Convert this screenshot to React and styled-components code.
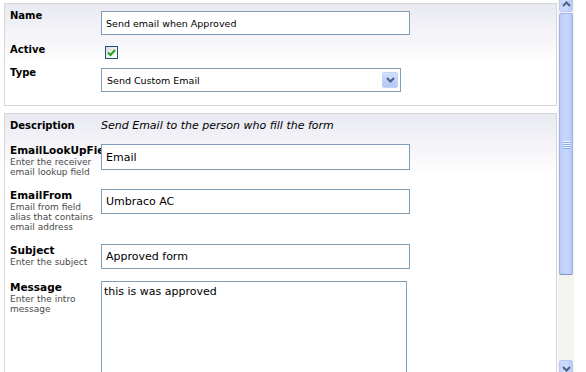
import React from "react";
import styled, { createGlobalStyle } from "styled-components";

const GlobalStyle = createGlobalStyle`
  html, body { margin: 0; padding: 0; background: #fff; overflow: hidden; }
  body { font-family: "DejaVu Sans", Verdana, sans-serif; color: #000; }
  * { box-sizing: border-box; }
`;

const Page = styled.div`
  display: flex;
  align-items: flex-start;
  width: 586px;
  height: 372px;
  overflow: hidden;
  background: #fff;
`;

const Main = styled.div`
  width: 553px;
  margin-left: 4px;
  padding-top: 3px;
  display: flex;
  flex-direction: column;
  gap: 7px;
`;

const Panel = styled.div`
  border: 1px solid #d6d6d6;
  background: linear-gradient(#e9e9f2 0, #fbfbfd 50px, #fff 60px);
  padding: ${(p) => p.$pad};
  height: ${(p) => p.$h};
  display: flex;
  flex-direction: column;
  gap: ${(p) => p.$gap};
`;

const Row = styled.div`
  display: grid;
  grid-template-columns: 91px 1fr;
  align-items: ${(p) => p.$align || "start"};
  height: ${(p) => p.$h || "auto"};
`;

const Label = styled.div`
  font-weight: bold;
  font-size: 10px;
  line-height: ${(p) => p.$lh || "10px"};
  white-space: nowrap;
  overflow: hidden;
`;

const FieldLabel = styled.div`
  overflow: hidden;
`;

const Title = styled.div`
  font-weight: bold;
  font-size: 10.5px;
  line-height: 13px;
  white-space: nowrap;
  overflow: hidden;
`;

const Help = styled.div`
  font-size: 9px;
  line-height: 10px;
  color: #4a4a4a;
  white-space: nowrap;
`;

const Italic = styled.div`
  font-style: italic;
  font-size: 11px;
  line-height: 12px;
  white-space: nowrap;
`;

const TextBox = styled.input`
  display: block;
  width: ${(p) => p.$w || "309px"};
  height: ${(p) => p.$h || "25px"};
  border: 1px solid #7f9db9;
  background: #fff;
  padding: 0 4px;
  margin: 0;
  font-family: "DejaVu Sans", Verdana, sans-serif;
  font-size: ${(p) => p.$fs || "11px"};
  color: #000;
  outline: none;
`;

const TextArea = styled.textarea`
  display: block;
  width: 306px;
  height: 110px;
  border: 1px solid #7f9db9;
  background: #fff;
  padding: 3px 2px;
  margin: 0;
  font-family: "DejaVu Sans", Verdana, sans-serif;
  font-size: 11px;
  line-height: 13px;
  color: #000;
  resize: none;
  outline: none;
  overflow: hidden;
`;

const CheckBox = styled.div`
  width: 13px;
  height: 13px;
  margin: 1px 0 0 4px;
  border: 1px solid #1c5180;
  background: linear-gradient(135deg, #dcdcd7 0%, #f4f4f0 60%, #fff 100%);
  display: flex;
  align-items: center;
  justify-content: center;
`;

const SelectBox = styled.div`
  width: 300px;
  height: 24px;
  border: 1px solid #7f9db9;
  background: #fff;
  display: flex;
  align-items: center;
  justify-content: space-between;
  padding: 0 2px 0 5px;
  font-size: 9.5px;
`;

const DropButton = styled.div`
  width: 16px;
  height: 16px;
  border-radius: 2px;
  border: 1px solid #c3d3f8;
  background: linear-gradient(#d3e0fd, #bccffa 60%, #b3c8f7);
  display: flex;
  align-items: center;
  justify-content: center;
`;

const Scrollbar = styled.div`
  width: 17px;
  height: 382px;
  margin-top: -5px;
  display: flex;
  flex-direction: column;
  background: #f4f3ee;
  border-left: 1px solid #fbfbf8;
  flex: 0 0 17px;
`;

const ScrollButton = styled.div`
  flex: 0 0 17px;
  margin: 0 1px;
  border: 1px solid #b9cbf3;
  border-radius: 2px;
  background: linear-gradient(90deg, #c6d6fc, #cad9fd 50%, #b9cbf6);
  display: flex;
  align-items: center;
  justify-content: center;
`;

const Thumb = styled.div`
  flex: 0 0 262px;
  margin: 1px 1px 0;
  border: 1px solid #9eb4e8;
  border-bottom-color: #7d94c8;
  border-radius: 2px;
  background: linear-gradient(90deg, #b8cbf7, #c6d6fd 40%, #c3d3fc 70%, #b2c6f4);
  display: flex;
  flex-direction: column;
  align-items: center;
  justify-content: center;
  gap: 1px;
`;

const Grip = styled.div`
  width: 7px;
  height: 1px;
  background: #eef4ff;
  box-shadow: 0 1px 0 #8eadf0;
`;

const Track = styled.div`
  flex: 1;
`;

const Chevron = ({ up }) => (
  <svg width="9" height="6" viewBox="0 0 9 6">
    <polyline
      points={up ? "1,5 4.5,1.5 8,5" : "1,1 4.5,4.5 8,1"}
      fill="none"
      stroke="#4d6185"
      strokeWidth="2"
    />
  </svg>
);

const fields = [
  { title: "EmailLookUpField", help: ["Enter the receiver", "email lookup field"], value: "Email", h: "26px" },
  { title: "EmailFrom", help: ["Email from field", "alias that contains", "email address"], value: "Umbraco AC" },
  { title: "Subject", help: ["Enter the subject"], value: "Approved form" },
];

export default function App() {
  return (
    <Page>
      <GlobalStyle />
      <Main>
        <Panel $pad="7px 0 0 5px" $h="103px" $gap="10px">
          <Row>
            <Label>Name</Label>
            <TextBox $h="24px" $fs="9.5px" defaultValue="Send email when Approved" />
          </Row>
          <Row $h="13px">
            <Label>Active</Label>
            <CheckBox>
              <svg width="9" height="8" viewBox="0 0 9 8">
                <polyline points="1,3.5 3.5,6 8,1" fill="none" stroke="#21a121" strokeWidth="2" />
              </svg>
            </CheckBox>
          </Row>
          <Row>
            <Label>Type</Label>
            <SelectBox>
              <span>Send Custom Email</span>
              <DropButton>
                <Chevron />
              </DropButton>
            </SelectBox>
          </Row>
        </Panel>
        <Panel $pad="6px 0 0 5px" $h="280px" $gap="12px">
          <Row $align="baseline">
            <Label $lh="12px">Description</Label>
            <Italic>Send Email to the person who fill the form</Italic>
          </Row>
          {fields.map((f) => (
            <Row key={f.title}>
              <FieldLabel>
                <Title>{f.title}</Title>
                {f.help.map((h) => (
                  <Help key={h}>{h}</Help>
                ))}
              </FieldLabel>
              <TextBox $h={f.h} defaultValue={f.value} />
            </Row>
          ))}
          <Row>
            <FieldLabel>
              <Title>Message</Title>
              <Help>Enter the intro</Help>
              <Help>message</Help>
            </FieldLabel>
            <TextArea defaultValue="this is was approved" />
          </Row>
        </Panel>
      </Main>
      <Scrollbar>
        <ScrollButton>
          <Chevron up />
        </ScrollButton>
        <Thumb>
          <Grip />
          <Grip />
          <Grip />
          <Grip />
        </Thumb>
        <Track />
        <ScrollButton>
          <Chevron />
        </ScrollButton>
      </Scrollbar>
    </Page>
  );
}
